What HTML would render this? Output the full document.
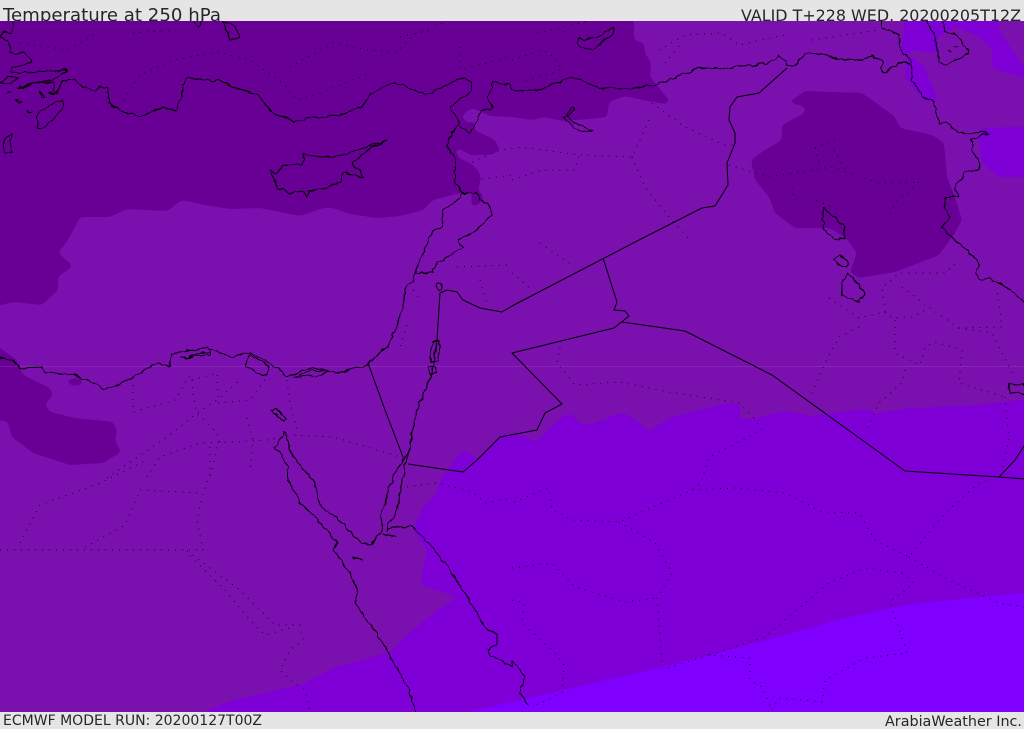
<!DOCTYPE html>
<html><head><meta charset="utf-8"><title>Temperature at 250 hPa</title>
<style>html,body{margin:0;padding:0;background:#e5e5e5;overflow:hidden}svg{display:block}text{font-family:"DejaVu Sans",sans-serif;fill:#262626}
.c{fill:none;stroke:#000;stroke-width:1;stroke-linejoin:round}
.d{fill:none;stroke:#000;stroke-width:1;stroke-dasharray:1 6;opacity:.85}</style></head><body>
<svg width="1024" height="729" viewBox="0 0 1024 729" xmlns="http://www.w3.org/2000/svg">
<defs>
<clipPath id="m"><rect x="0" y="21" width="1024" height="691"/></clipPath>
<filter id="s" filterUnits="userSpaceOnUse" x="-40" y="-30" width="1104" height="789" color-interpolation-filters="sRGB">
<feGaussianBlur stdDeviation="2.2"/>
<feComponentTransfer><feFuncA type="linear" slope="12" intercept="-5.5"/></feComponentTransfer>
</filter>
<filter id="w" filterUnits="userSpaceOnUse" x="-10" y="0" width="1044" height="729" color-interpolation-filters="sRGB">
<feTurbulence type="fractalNoise" baseFrequency=".14" numOctaves="2" seed="4" result="n"/>
<feDisplacementMap in="SourceGraphic" in2="n" scale="5" xChannelSelector="R" yChannelSelector="G"/>
</filter>
</defs>
<rect width="1024" height="729" fill="#e5e5e5"/>
<text x="3" y="21" font-size="17.6" textLength="218" lengthAdjust="spacingAndGlyphs">Temperature at 250 hPa</text>
<text x="741" y="21" font-size="16.2" textLength="280" lengthAdjust="spacingAndGlyphs">VALID T+228 WED. 20200205T12Z</text>
<text x="3" y="725" font-size="14" textLength="259" lengthAdjust="spacingAndGlyphs">ECMWF MODEL RUN: 20200127T00Z</text>
<text x="885" y="726" font-size="14" textLength="137" lengthAdjust="spacingAndGlyphs">ArabiaWeather Inc.</text>
<g clip-path="url(#m)">
<rect x="0" y="21" width="1024" height="691" fill="#7a10ad"/>
<g fill="#680095" filter="url(#s)">
<path d="M-20 -10L634 -10L634 40L644 43L645 53L651 63L650 77L669 100L667 104L652 102L625 96L609 102L607 117L589 119L562 121L545 117L532 120L512 117L490 116L482 112L472 108L462 115L465 122L475 122L474 130L487 136L495 140L500 150L490 155L470 155L460 149L455 150L459 158L470 163L478 170L481 178L478 190L484 197L478 205L471 206L472 193L460 193L433 200L423 210L400 216L377 218L350 214L333 208L323 208L300 216L280 212L260 208L230 209L205 205L182 200L167 211L127 209L110 217L80 217L68 240L58 253L73 266L58 277L58 290L42 305L13 302L-20 310Z"/>
<path d="M789 102L805 91L862 93L879 105L895 117L900 128L932 135L944 143L947 177L955 197L962 220L955 233L939 255L895 272L859 278L850 272L857 253L845 237L829 228L795 228L775 213L769 197L755 180L751 160L765 150L782 140L782 125L805 113L805 107Z"/>
<path d="M-20 335L0 348L17 360L23 375L50 388L53 395L45 405L50 412L75 418L113 422L117 430L115 440L121 452L103 463L70 465L33 453L12 437L8 422L-20 416Z"/>
<ellipse cx="75" cy="382" rx="8" ry="3.6"/>
</g>
<g fill="#7e00d6" filter="url(#s)">
<path d="M1044 397L979 405L912 408L879 413L865 409L829 413L812 416L785 411L752 419L739 418L741 404L725 403L669 418L649 431L640 423L622 412L589 425L579 423L572 413L562 417L535 442L524 435L512 435L500 437L477 460L467 451L460 452L440 480L437 493L423 507L413 530L427 550L420 585L458 597L433 613L407 635L390 652L333 668L300 685L233 700L160 730L1044 730Z"/>
<path d="M905 -10L999 -10L999 30L1024 67L1044 90L1024 78L992 68L992 50L980 37L956 27L937 37L939 53L910 50L907 63L905 77L915 90L925 102L939 100L929 80L925 67L912 57L900 52L904 33Z"/>
<path d="M980 128L1012 127L1044 127L1044 177L999 177L982 163L979 140Z"/>
</g>
<path fill="#7f00ff" filter="url(#s)" d="M1044 591L912 604L845 618L779 637L679 663L612 679L512 702L400 728L1044 730Z"/>
<rect x="0" y="366" width="1024" height="1" fill="#fff" opacity=".09"/>
<g class="d">
<path d="M0 550L203 550M20 543L40 505L100 483L147 460M85 547L125 525L140 490L200 493M203 550L197 520L203 493L212 470L217 445"/>
<path d="M187 551L240 590L275 625L300 625L303 640L290 650L280 670L290 680L305 690L310 712M190 556L225 590L250 620L265 635L290 628"/>
<path d="M107 478L167 437L197 413L217 400L240 380M147 477L160 457L200 443L233 442L267 440L293 435L333 437L367 447L400 457"/>
<path d="M192 380L193 397L197 413L217 433L220 443M192 380L217 373L218 403L250 400L267 377M287 380L290 403L298 433M247 418L253 440L250 473M210 447L210 480M133 385L133 412L175 400L190 375"/>
<path d="M20 43L67 50L97 33M133 33L173 30M123 100L140 75L173 60L217 52L250 60L283 83L297 100L320 93L377 70M290 67L333 43L367 50L397 52L417 32L443 23M400 37L433 30M460 47L460 70L510 57"/>
<path d="M512 60L542 50L555 57L562 70L522 82M537 33L589 21M659 50L685 35L722 33L739 45L785 35M812 40L879 30M665 63L680 45"/>
<path d="M652 103L685 127L725 145L735 145M649 120L632 157L579 155L522 147L500 150L470 163M632 157L645 187L669 217L690 240M512 180L542 170L575 170L579 155M540 243L575 267M512 273L532 290M475 180L512 175"/>
<path d="M729 165L769 177L795 173L832 167L879 183L919 182L895 203L889 217M815 148L837 138M815 148L820 167M834 150L845 170M792 187L795 200L815 200L840 210"/>
<path d="M829 298L859 318L885 312L882 288L899 273L945 273L959 260M885 312L892 318L912 317L930 308L959 328L1002 327L997 290M902 287L930 308M895 320L895 353L920 365L925 347L935 342L962 350L959 383L1005 397"/>
<path d="M859 327L839 337L825 363L810 398M905 370L902 383L879 403L865 433M959 328L992 333L1012 373"/>
<path d="M560 347L557 363L575 385L619 382L669 392L739 403L754 418L762 430L709 457L702 480"/>
<path d="M514 502L549 488L552 510L572 520L619 522L662 503L692 490L702 482M619 522L655 543L672 573L657 598L662 663M692 490L735 488L785 493L822 512L859 513L875 540L909 557L945 513L979 483L989 480M909 557L945 578L999 603L1024 607"/>
<path d="M902 573L914 583L890 602L907 653L865 658L825 680L822 702L779 698L772 710M902 573L865 568L829 583L782 622L765 637L709 655L750 658L750 680L762 687L772 710M709 655L662 670"/>
<path d="M512 568L552 563L575 587L625 602L657 598M512 600L524 603L522 623L555 653L564 665L562 693L532 707"/>
<path d="M1005 397L1009 440L1002 470M407 487L437 483L473 492L485 503L512 498M457 267L510 265M480 280L487 303M413 290L420 300M407 325L400 347"/>
</g>
<g class="c" filter="url(#w)">
<path d="M13 18L12 33L2 33L0 37L8 40L10 52L18 53L22 52L32 60L25 65L13 67L12 72L18 73L68 70L53 80L38 82L20 87L18 89L35 83L53 82L55 88L50 94L57 92L63 80L75 80L83 87L95 90L100 86L108 89L108 103L122 112L133 115L140 117L163 107L175 112L183 95L183 82L188 78L217 81L257 95L273 113L295 122L313 117L340 115L357 108L362 107L373 92L395 82L427 95L443 87L462 77L472 83L470 92L450 107L460 123L452 132L447 145L455 160L455 180L461 193L460 198L443 210L442 227L433 230L415 272L413 282L407 285L400 317L387 347L367 365L337 373L313 367L287 376L272 365L250 352L232 357L207 348L172 353L170 365L163 366L157 363L115 387L103 388L95 383L72 375L45 373L43 367L20 368L13 361L0 357"/>
<path d="M460 127L470 132L475 125L480 112L493 108L488 98L493 81L512 86L512 90L535 91L572 77L599 88L625 89L655 85L702 67L725 68L769 63L779 56L786 60L787 67L795 65L806 53L822 54L845 60L860 61L872 56L883 62L880 68L885 73L899 63L909 63"/>
<path d="M881 18L882 28L899 35L900 47L910 60L912 80L924 97L934 102L939 123L945 123L959 133L979 132L989 133L972 140L972 150L980 163L979 170L965 172L962 180L955 183L958 197L945 197L944 207L949 217L942 227L954 240L969 252L980 265L975 272L979 279L989 279L1009 288L1026 304"/>
<path d="M415 272L433 273L437 263L462 248L458 240L473 233L492 215L488 203L480 200L477 193L461 193"/>
<path d="M437 340L432 373L417 410L408 453L402 480L397 513L388 525L388 530L392 527L413 527L433 548L450 570L462 588L487 630L497 633L497 643L488 650L490 655L512 667L512 660L525 677L519 693L529 705"/>
<path d="M408 453L393 477L380 517L382 530L370 545L362 543L340 522L320 505L313 480L293 457L285 432L275 447L288 467L288 480L300 502L327 530L337 542L333 550L350 573L358 590L355 602L387 650L408 688L417 714"/>
<path d="M270 170L278 188L290 193L303 191L307 197L309 191L327 188L340 182L343 173L363 177L353 163L367 150L388 140L367 147L340 156L320 157L304 154L303 165L283 165L277 173Z"/>
<path d="M63 100L63 108L55 118L42 129L37 127L38 113L50 105Z M12 133L10 142L12 152L5 153L3 143L8 137Z M222 21L234 25L240 37L230 41L227 30Z M193 21L198 28L202 21 M0 83L8 77L18 77L12 82L2 84Z M7 93L10 93 M15 100L22 103L18 104Z M27 111L32 112L27 112Z M40 92L45 97L41 97Z M49 92L55 94L50 94Z"/>
<path d="M576 42L580 38L586 40L599 37L614 27L612 35L592 50L580 47Z"/>
<path d="M925 18L935 37L939 62L945 65L969 53L960 40L955 33L945 32L942 18 M949 50L951 52M954 46L957 47"/>
<path d="M572 107L564 118L579 132L592 130L584 127L574 122L567 117L574 110Z"/>
<path d="M824 208L822 220L824 230L835 239L845 238L844 227Z"/>
<path d="M834 260L840 255L849 262L847 267L842 267Z M846 272L842 283L842 295L859 302L865 293L852 277Z"/>
<path d="M1008 385L1024 384L1024 394L1010 392Z M436 287A3 4 0 1 0 442 287A3 4 0 1 0 436 287Z M430 363L433 342L439 340L438 361Z M429 367L435 366L437 373L430 374Z"/>
<path d="M182 358L210 351L210 354L182 358Z M245 365L250 354L270 367L267 375L258 375Z M293 377L313 370L330 372L315 376Z"/>
<path d="M271 410L276 408L285 419L284 421Z M383 533L388 534L395 537L386 536Z M354 557L361 560L355 559Z"/>
</g>
<g class="c">
<path d="M787 68L759 93L737 97L730 107L729 120L735 133L735 143L727 163L728 185L715 206L702 208L639 240L512 306L502 312L480 308L463 300L457 292L447 290L440 293L437 340"/>
<path d="M603 258L617 302L614 310L625 311L629 316L614 328L512 353L562 404L545 413L537 430L500 437L477 460L463 472L408 464"/>
<path d="M622 322L685 331L772 375L905 471L999 477L1026 479M999 477L1015 460L1026 443"/>
<path d="M368 363L385 410L403 457"/>
</g>
</g>
</svg>
</body></html>
